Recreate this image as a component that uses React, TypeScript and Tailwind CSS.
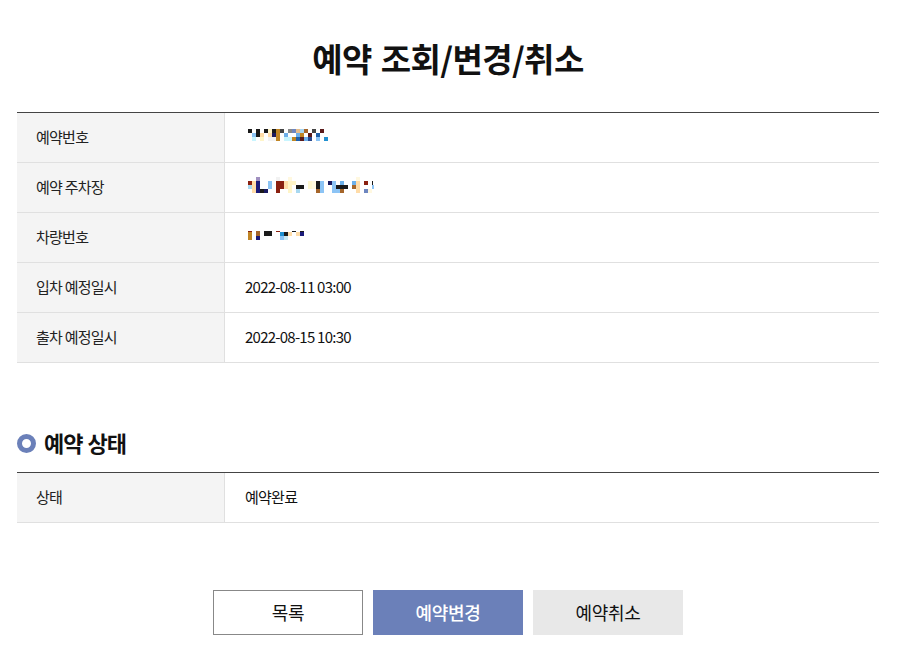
import React from "react";

type Cell = [number, number, string, number?, number?];

const tan = "#c08525";
const rust = "#8a2010";
const dark = "#1a1a1a";
const navy = "#1a1a7a";
const sky = "#8cc4f5";
const peach = "#ffdca8";
const cream = "#fff5c8";
const ice = "#c8f5ff";
const blue = "#6db0ea";
const brown = "#a5652a";
const wine = "#5a1a1a";
const royal = "#2060a8";

// mosaic cells: [col, row, colour, optional w, optional h], 4px grid
const bookingNo: Cell[] = [
  [0, 0, dark], [2, 0, dark], [4, 0, dark], [5, 0, cream], [6, 0, dark], [7, 0, tan], [8, 0, "#444444"],
  [10, 0, "#888888"], [11, 0, "#6d86c0"], [12, 0, "#e5bd8c"], [13, 0, "#a8d5f0"], [14, 0, brown], [16, 0, "#444444"], [18, 0, wine],
  [1, 1, sky], [2, 1, dark], [3, 1, peach], [5, 1, peach], [6, 1, "#1a1a60"], [7, 1, tan], [9, 1, blue],
  [12, 1, blue], [13, 1, tan], [15, 1, wine], [17, 1, royal],
  [1, 2, ice], [3, 2, cream], [5, 2, "#f2f2f2"], [6, 2, "#f2f2f2"], [7, 2, tan], [9, 2, ice], [10, 2, ice],
  [11, 2, tan], [12, 2, royal], [13, 2, wine], [14, 2, blue], [15, 2, "#2a4a90"], [17, 2, sky], [19, 2, "#2090d0"],
];

const parkingLot: Cell[] = [
  [2, 0, "#a090c0"], [7, 0, "#f2f2f2"], [10, 0, "#fff8e0"], [27, 0, "#fff8e0"],
  [0, 1, rust], [1, 1, peach], [2, 1, navy], [5, 1, sky], [7, 1, rust, 2], [9, 1, peach], [10, 1, cream, 2],
  [15, 1, "#fff8d0"], [16, 1, "#fffae0"], [17, 1, dark], [18, 1, sky], [20, 1, "#1a1a60"], [21, 1, sky], [23, 1, blue],
  [26, 1, blue], [27, 1, peach], [29, 1, rust], [31, 1, dark, 0.25],
  [0, 2, "#a8d8f0"], [1, 2, peach], [2, 2, navy], [5, 2, sky], [7, 2, rust, 2], [9, 2, peach], [10, 2, cream],
  [12, 2, dark, 2], [15, 2, "#fff8d0"], [16, 2, "#fffae0"], [17, 2, dark], [18, 2, sky], [21, 2, sky], [22, 2, dark, 3],
  [26, 2, brown], [27, 2, peach], [31, 2, sky, 0.5],
  [1, 3, peach], [2, 3, navy], [3, 3, dark], [4, 3, "#1a1a60"], [7, 3, rust], [10, 3, cream], [12, 3, "#a8d8f0"],
  [17, 3, brown], [18, 3, sky], [21, 3, sky, 2], [23, 3, brown], [27, 3, peach], [29, 3, "#6d86c0"], [30, 3, "#fff8e0"],
];

const carNo: Cell[] = [
  [0, 0, rust, 1, 0.25], [2, 0, brown, 1, 0.25], [4, 0, dark, 2, 0.25], [7, 0, rust, 1, 0.25], [11, 0, dark, 1, 0.25], [13, 0, dark, 1, 0.25],
  [0, 0.25, tan, 1, 2], [2, 0.25, brown], [2, 1.25, navy], [4, 0.25, dark, 2, 1],
  [8, 0.25, "#2090d0"], [8, 1.25, sky], [9, 0.25, dark], [9, 1.25, "#c8e8f0"], [10, 0.25, peach],
  [12, 0.25, peach], [13, 0.25, navy],
];

const Mosaic = ({ cells, cols, rows }: { cells: Cell[]; cols: number; rows: number }) => (
  <svg width={cols * 4} height={rows * 4} viewBox={`0 0 ${cols * 4} ${rows * 4}`} shapeRendering="crispEdges" className="block">
    {cells.map(([x, y, fill, w = 1, h = 1], i) => (
      <rect key={i} x={x * 4} y={y * 4} width={w * 4} height={h * 4} fill={fill} />
    ))}
  </svg>
);

const Row = ({ label, children }: { label: string; children: React.ReactNode }) => (
  <div className="flex h-[50px] border-b border-[#e0e0e0]">
    <div className="flex w-[208px] items-center border-r border-[#e0e0e0] bg-[#f4f4f4] pb-[1px] pl-[19px] text-[15px] tracking-[-0.75px] text-[#222222]">
      {label}
    </div>
    <div className="flex flex-1 items-center pb-[1px] pl-5 text-[15px] tracking-[-0.75px] text-[#111111]">{children}</div>
  </div>
);

export default function App() {
  return (
    <div
      className="h-[653px] w-[897px] overflow-hidden bg-white pl-[17px] pr-[18px] pt-[33px]"
      style={{ fontFamily: '"Noto Sans CJK KR", "Noto Sans", sans-serif' }}
    >
      <h1 className="h-[50px] text-center text-[33px] leading-[50px] font-bold tracking-[-0.6px] text-[#111111] [word-spacing:2px]">
        예약 조회/변경/취소
      </h1>

      <div className="mt-[29px] border-t border-[#444444]">
        <Row label="예약번호">
          <div className="-mt-[5px] ml-[3px]"><Mosaic cells={bookingNo} cols={20} rows={3} /></div>
        </Row>
        <Row label="예약 주차장">
          <div className="-mt-[5px] ml-[3px]"><Mosaic cells={parkingLot} cols={32} rows={4} /></div>
        </Row>
        <Row label="차량번호">
          <div className="ml-[3px]"><Mosaic cells={carNo} cols={15} rows={3} /></div>
        </Row>
        <Row label="입차 예정일시">2022-08-11 03:00</Row>
        <Row label="출차 예정일시">2022-08-15 10:30</Row>
      </div>

      <div className="mt-[62px] flex h-[36px] items-center">
        <span className="h-[19px] w-[19px] rounded-full border-[5px] border-[#6b80b9] bg-white" />
        <h2 className="ml-2 pb-[2px] text-[22px] font-bold tracking-[-1px] text-[#111111] [word-spacing:1px]">예약 상태</h2>
      </div>

      <div className="mt-[11px] border-t border-[#444444]">
        <Row label="상태">예약완료</Row>
      </div>

      <div className="mt-[67px] flex justify-center gap-[10px] text-[18px] tracking-[-0.3px]">
        <button className="h-[45px] w-[150px] border border-[#888888] bg-white text-[#111111]">목록</button>
        <button className="h-[45px] w-[150px] bg-[#6b80b9] font-medium text-white">예약변경</button>
        <button className="h-[45px] w-[150px] bg-[#e8e8e8] text-[#111111]">예약취소</button>
      </div>
    </div>
  );
}
